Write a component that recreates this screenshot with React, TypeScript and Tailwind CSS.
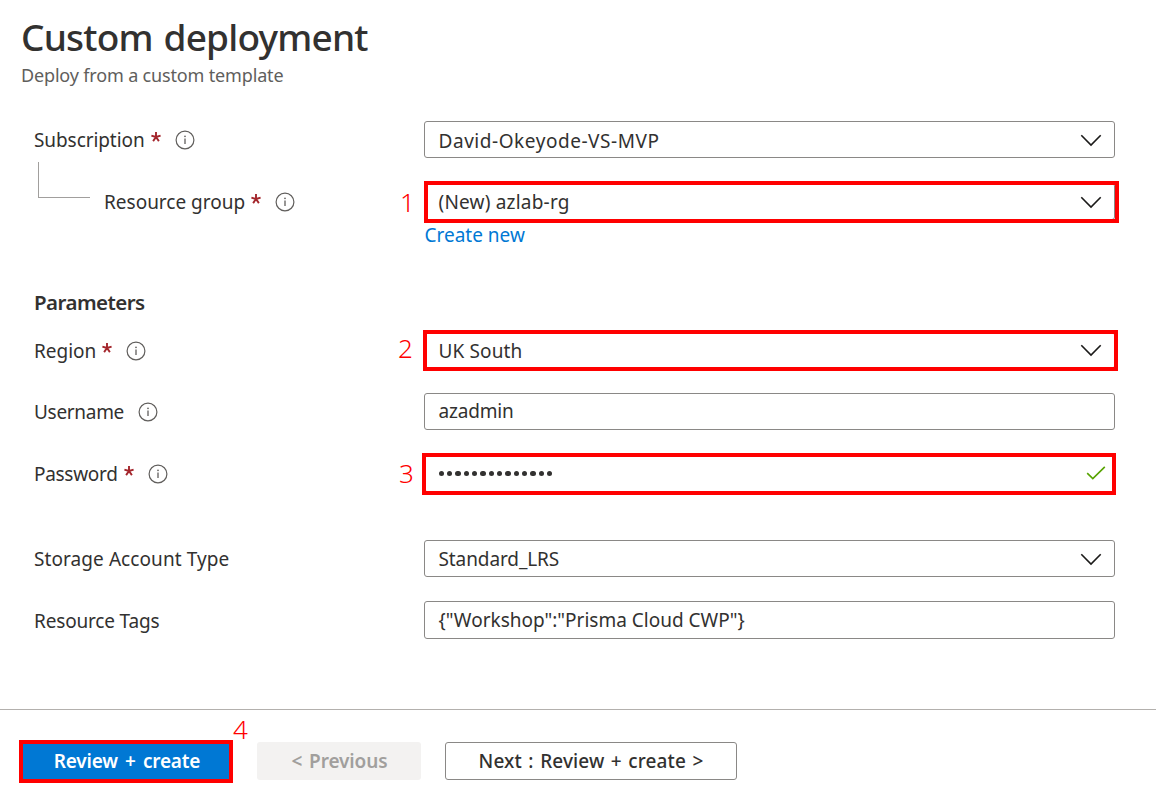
import type { ReactNode } from "react";

function InfoIcon({ className }: { className?: string }) {
  return (
    <svg viewBox="0 0 20 20" className={`h-5 w-5 shrink-0 ${className ?? ""}`} fill="none">
      <circle cx="10" cy="10" r="8.9" stroke="#605e5c" strokeWidth="1.2" />
      <path d="M10 8.4V14" stroke="#605e5c" strokeWidth="1.3" />
      <circle cx="10" cy="6.3" r="0.85" fill="#605e5c" />
    </svg>
  );
}

function Required() {
  return (
    <svg viewBox="0 0 10 10" className="mb-[6px] ml-[6px] h-[10px] w-[10px] shrink-0" fill="none">
      <path
        d="M5 5V0M5 5L0.4 3.6M5 5L9.6 3.6M5 5L2.1 9.1M5 5L7.9 9.1"
        stroke="#a4262c"
        strokeWidth="1.9"
      />
    </svg>
  );
}

function Chevron({ className = "" }: { className?: string }) {
  return (
    <svg viewBox="0 0 22 13" className={`mr-[12px] h-[13px] w-[22px] shrink-0 ${className}`} fill="none">
      <path d="M1.3 1.3L11 11L20.7 1.3" stroke="#1b1a19" strokeWidth="1.6" />
    </svg>
  );
}

function Check() {
  return (
    <svg viewBox="0 0 20 14" className="mr-[8px] mb-[2px] h-[14px] w-[20px] shrink-0" fill="none">
      <path d="M1.2 7.2L6.8 12.6L18.8 0.9" stroke="#57a300" strokeWidth="1.6" />
    </svg>
  );
}

type RowProps = {
  label: string;
  labelClass?: string;
  required?: boolean;
  info?: boolean;
  className?: string;
  fieldClass?: string;
  children: ReactNode;
};

function Row({ label, labelClass = "", required, info, className = "", fieldClass = "h-[37px]", children }: RowProps) {
  return (
    <div className={`flex items-center ${className}`}>
      <div className="flex w-[390px] shrink-0 items-center">
        <span className={`whitespace-nowrap leading-[26px] ${labelClass}`}>{label}</span>
        {required && <Required />}
        {info && <InfoIcon className="ml-[14px]" />}
      </div>
      <div
        className={`relative flex w-[691px] items-center justify-between rounded-[3px] border border-[#8a8886] pl-[13.5px] ${fieldClass}`}
      >
        {children}
      </div>
    </div>
  );
}

function Step({ n, className }: { n: number; className: string }) {
  return (
    <span className={`absolute text-[26px] leading-[26px] font-light text-[#ff0000] ${className}`}>{n}</span>
  );
}

function Highlight({ className }: { className: string }) {
  return <span className={`pointer-events-none absolute border-4 border-[#ff0000] ${className}`} />;
}

export default function App() {
  return (
    <div className="flex h-[805px] w-[1156px] flex-col overflow-hidden bg-white font-['Noto_Sans',sans-serif] text-[19px] text-[#323130]">
      <header className="h-[121px] pt-[12px] pl-[21px]">
        <h1 className="text-[37px] leading-[50px] font-medium tracking-[-0.8px] [word-spacing:2px]">
          Custom deployment
        </h1>
        <p className="text-[18px] leading-[26px] tracking-[-0.16px] text-[#605e5c]">Deploy from a custom template</p>
      </header>

      <main className="h-[588px] pl-[34px]">
        <Row label="Subscription" labelClass="mt-[1px] tracking-[-0.08px]" required info>
          <span className="mt-[3px] tracking-[0.55px]">David-Okeyode-VS-MVP</span>
          <Chevron className="mt-[2px]" />
        </Row>
        <div className="relative mt-[25px]">
          <span className="absolute top-[-21px] left-[4px] h-[36px] w-[52px] border-b border-l border-[#a19f9d]" />
          <Row label="Resource group" labelClass="ml-[70px]" required info>
            <span className="mt-[2px] tracking-[0.2px]">(New) azlab-rg</span>
            <Chevron className="mt-[2px]" />
            <Highlight className="top-[-3px] left-[-1px] h-[42px] w-[695px]" />
            <Step n={1} className="top-[5px] left-[-25px]" />
          </Row>
        </div>
        <a className="mt-[2px] ml-[390.5px] block leading-[26px] text-[#0078d4]">Create new</a>

        <h2 className="mt-[41px] text-[20.5px] leading-[26px] font-semibold tracking-[-0.55px]">Parameters</h2>
        <Row label="Region" required info className="mt-[17px]">
          <span className="mt-[2px] tracking-[0.13px]">UK South</span>
          <Chevron />
          <Highlight className="top-[-3px] left-[-2px] h-[41px] w-[695px]" />
          <Step n={2} className="top-[2px] left-[-27px]" />
        </Row>
        <Row label="Username" labelClass="tracking-[-0.3px]" info className="mt-[24px]">
          <span className="tracking-[-0.2px]">azadmin</span>
        </Row>
        <Row label="Password" labelClass="tracking-[-0.3px]" required info className="mt-[25px]">
          <span className="flex gap-[2.85px]">
            {Array.from({ length: 14 }, (_, i) => (
              <span key={i} className="h-[5.5px] w-[5.5px] rounded-full bg-[#323130]" />
            ))}
          </span>
          <Check />
          <Highlight className="top-[-3px] left-[-3px] h-[42px] w-[694px]" />
          <Step n={3} className="top-[4px] left-[-26px]" />
        </Row>
        <Row label="Storage Account Type" labelClass="tracking-[0.08px]" className="mt-[48px]">
          <span className="mt-[2px] tracking-[-0.1px]">Standard_LRS</span>
          <Chevron className="mt-[1px]" />
        </Row>
        <Row label="Resource Tags" labelClass="mt-[2px] tracking-[-0.17px]" className="mt-[24px]" fieldClass="h-[38px]">
          <span>{'{"Workshop":"Prisma Cloud CWP"}'}</span>
        </Row>
      </main>

      <footer className="flex flex-1 items-start border-t border-[#b3b0ad] pt-[30px] pl-[19px] font-semibold">
        <button className="relative h-[43px] w-[214px] border-4 border-[#ff0000] bg-[#0078d4] pl-[2px] tracking-[-0.2px] whitespace-nowrap text-white [word-spacing:2.5px]">
          Review + create
          <Step n={4} className="top-[-28px] left-[210px]" />
        </button>
        <button className="mt-[2px] ml-[24px] h-[38px] w-[164px] rounded-[3px] bg-[#f3f2f1] pl-[1px] tracking-[-0.1px] text-[#a19f9d] [word-spacing:2px]">
          &lt; Previous
        </button>
        <button className="mt-[2px] ml-[24px] h-[38px] w-[292px] rounded-[3px] border border-[#8a8886] font-medium tracking-[0.1px] [word-spacing:1.5px]">
          Next : Review + create &gt;
        </button>
      </footer>
    </div>
  );
}
